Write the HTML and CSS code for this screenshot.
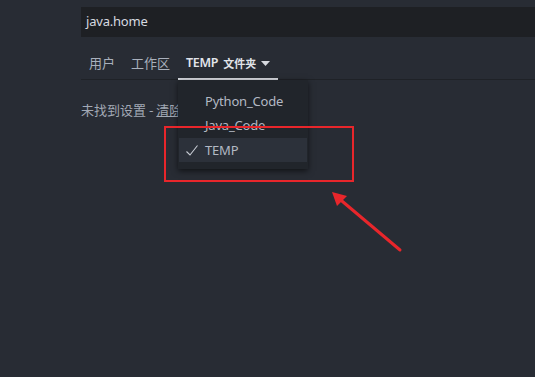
FILE: index.html
```html
<!DOCTYPE html>
<html lang="zh-CN">
<head>
<meta charset="utf-8">
<link rel="stylesheet" href="styles.css">
</head>
<body>
<div class="editor">
  <div class="search">java.home</div>
  <div class="tabs">
    <div class="tab">用户</div>
    <div class="tab">工作区</div>
    <div class="tab active"><span class="tname">TEMP</span><span class="tsub">文件夹</span><svg class="caret" width="9" height="5" viewBox="0 0 9 5"><path d="M0 0h9L4.5 5z" fill="#d7dae0"/></svg></div>
  </div>
  <div class="empty">未找到设置 - <span class="link">清除</span></div>
</div>
<div class="menu">
  <div class="item"><span class="check"></span>Python_Code</div>
  <div class="item"><span class="check"></span>Java_Code</div>
  <div class="item selected"><span class="check"><svg width="12" height="11" viewBox="0 0 12 11"><path d="M0.5 6.5L4 10L11.5 0.5" fill="none" stroke="#c8ccd4" stroke-width="1.1"/></svg></span>TEMP</div>
</div>
<svg class="annot" width="535" height="377" viewBox="0 0 535 377">
  <rect x="165" y="127" width="188" height="54" fill="none" stroke="#e8262b" stroke-width="2"/>
  <path d="M400 250L336 196" stroke="#e8262b" stroke-width="3" stroke-linecap="round"/>
  <path d="M332 192L347 196L337 206z" fill="#e8262b"/>
</svg>
</body>
</html>
```
FILE: styles.css
```css
html, body {
  margin: 0;
  padding: 0;
}
body {
  background: #282c34;
  width: 535px;
  height: 377px;
  overflow: hidden;
  position: relative;
  font-family: "Noto Sans", "Noto Sans CJK SC", sans-serif;
  font-size: 13px;
  color: #abb2bf;
}
.editor {
  padding: 7px 0 0 81px;
}
.search {
  height: 30px;
  background: #1e2024;
  color: #d7dae0;
  line-height: 29px;
  padding-left: 5px;
  letter-spacing: -0.2px;
}
.tabs {
  display: flex;
  margin-top: 14px;
  height: 28px;
  border-bottom: 1px solid #1f2227;
}
.tab {
  padding: 3px 8px 0;
  height: 28px;
  line-height: 18px;
  color: #a9b0bc;
  font-family: "Noto Sans CJK SC", sans-serif;
  display: flex;
  align-items: flex-start;
  box-sizing: border-box;
}
.tab.active {
  border-bottom: 2px solid #d7dae0;
  color: #e1e4ea;
  height: 29px;
}
.tname {
  font-family: "Noto Sans", sans-serif;
  font-weight: 600;
  font-size: 12.5px;
  letter-spacing: -0.3px;
}
.tsub {
  font-size: 11px;
  font-weight: 600;
  margin-left: 5px;
}
.caret {
  margin-left: 5px;
  margin-top: 7px;
}
.empty {
  margin-top: 20px;
  font-family: "Noto Sans CJK SC", sans-serif;
  color: #a2a9b5;
  white-space: nowrap;
}
.link {
  text-decoration: underline;
}
.menu {
  position: absolute;
  left: 178px;
  top: 80px;
  width: 130px;
  padding: 9px 1px 6px;
  box-sizing: border-box;
  height: 89px;
  background: #21252b;
  box-shadow: 0 2px 6px rgba(0, 0, 0, 0.6);
}
.item {
  height: 24px;
  display: flex;
  align-items: center;
  color: #b3b9c4;
  font-size: 13px;
  letter-spacing: -0.2px;
}
.item.selected {
  background: #2c313a;
  margin-top: 1px;
}
.check {
  width: 26px;
  display: flex;
  justify-content: flex-end;
  box-sizing: border-box;
}
.check svg {
  margin-right: 7px;
}
.annot {
  position: absolute;
  left: 0;
  top: 0;
}
```
